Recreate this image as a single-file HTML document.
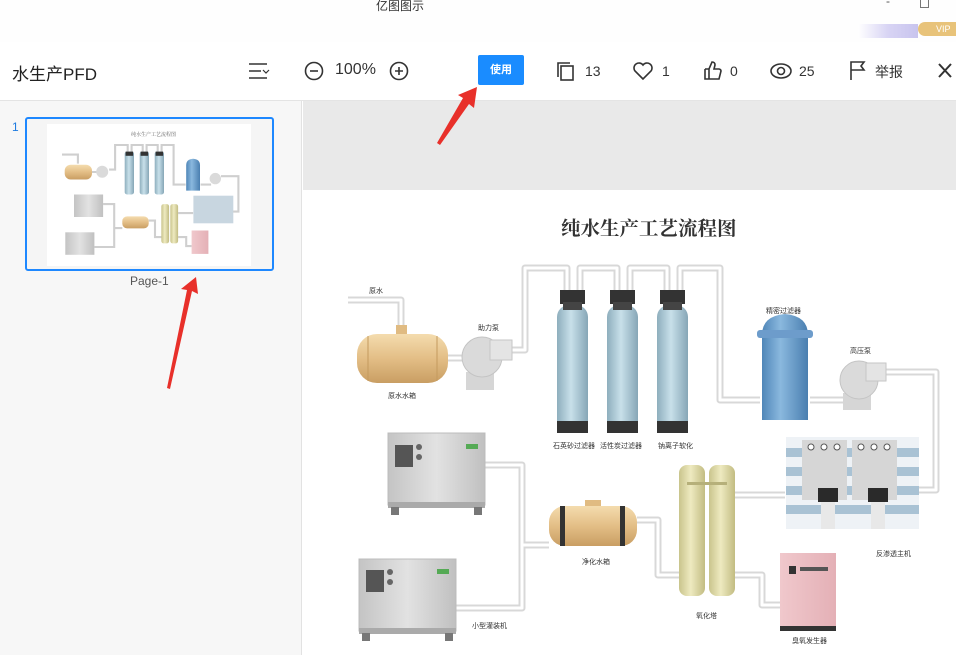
<!DOCTYPE html>
<html><head><meta charset="utf-8"><style>
*{margin:0;padding:0;box-sizing:border-box}
body{width:956px;height:655px;overflow:hidden;background:#fff;font-family:"Liberation Sans","Noto Sans CJK SC",sans-serif;position:relative}
.abs{position:absolute}
.tb{font-size:14px;color:#333}
</style></head><body>
<div class="abs" style="left:0;top:0;width:956px;height:42px;background:#fefefe"></div>
<div class="abs" style="left:376px;top:-3px;font-size:12px;color:#333">亿图图示</div>
<div class="abs" style="left:886px;top:-6px;font-size:12px;color:#555">-</div>
<div class="abs" style="left:920px;top:0px;width:9px;height:8px;border:1px solid #777;border-top:none"></div>
<div class="abs" style="left:858px;top:24px;width:60px;height:14px;background:linear-gradient(90deg,#fff,#d8d4f4,#c8c4ee)"></div>
<div class="abs" style="left:918px;top:22px;width:38px;height:14px;background:#e8c37a;border-radius:7px 0 0 7px;font-size:9px;color:#fff;padding-left:18px;line-height:14px">VIP</div>
<div class="abs" style="left:0;top:42px;width:956px;height:59px;background:#fff;border-bottom:1px solid #e4e4e4"></div>
<div class="abs tb" style="left:12px;top:60px;font-size:17px;color:#222">水生产PFD</div>
<svg class="abs" style="left:0;top:42px" width="956" height="58">
<g stroke="#333" stroke-width="1.6" fill="none">
<path d="M249 22h18M249 29h12M249 36h18"/><path d="M263 28l3 3 3-3" stroke-width="1.2"/>
<circle cx="314" cy="29" r="8.5"/><path d="M310 29h8"/>
<circle cx="399" cy="29" r="8.5"/><path d="M395 29h8M399 25v8"/>
<rect x="561" y="24" width="12" height="14"/><path d="M558 35V21h12"/>
<path d="M643 37l-8-8a5 5 0 0 1 8-6 5 5 0 0 1 8 6z"/>
<path d="M705 27h4l3-7c2 0 3 1 3 3l-1 4h5c1 0 2 1 2 2l-2 8h-10v-10M705 27v10h4"/>
<ellipse cx="781" cy="29" rx="10" ry="7"/><circle cx="781" cy="29" r="3.5"/>
<path d="M851 38V20h13l-3 4 3 4h-13"/>
<path d="M939 22l12 13M951 22l-12 13" stroke-width="2"/>
</g></svg>
<div class="abs tb" style="left:335px;top:61px;font-size:16px">100%</div>
<div class="abs" style="left:478px;top:55px;width:46px;height:30px;background:#1a8cff;border-radius:2px;color:#fff;font-size:11px;line-height:30px;text-align:center;font-weight:bold">使用</div>
<div class="abs tb" style="left:585px;top:63px">13</div>
<div class="abs tb" style="left:662px;top:63px">1</div>
<div class="abs tb" style="left:730px;top:63px">0</div>
<div class="abs tb" style="left:799px;top:63px">25</div>
<div class="abs tb" style="left:875px;top:62px">举报</div>
<div class="abs" style="left:0;top:101px;width:302px;height:554px;background:#f7f7f7;border-right:1px solid #e2e2e2"></div>
<div class="abs" style="left:12px;top:120px;font-size:12px;color:#1e7be0">1</div>
<div class="abs" style="left:25px;top:117px;width:249px;height:154px;border:2px solid #1e88ff;border-radius:3px;background:#f5f5f5"></div>
<div class="abs" style="left:47px;top:124px;width:204px;height:142px;background:#fff"></div>
<div class="abs" style="left:130px;top:274px;font-size:12px;color:#555">Page-1</div>
<div class="abs" style="left:303px;top:101px;width:653px;height:89px;background:#e9e9e9"></div>

<svg class="abs" style="left:0;top:0" width="956" height="655" viewBox="0 0 956 655">
<defs>
<linearGradient id="tan" x1="0" y1="0" x2="0" y2="1"><stop offset="0" stop-color="#f4dcae"/><stop offset=".5" stop-color="#e3be86"/><stop offset="1" stop-color="#c99e63"/></linearGradient>
<linearGradient id="col" x1="0" x2="1"><stop offset="0" stop-color="#8eaebd"/><stop offset=".45" stop-color="#c8e0ea"/><stop offset="1" stop-color="#86a6b6"/></linearGradient>
<linearGradient id="blu" x1="0" x2="1"><stop offset="0" stop-color="#4f86b8"/><stop offset=".4" stop-color="#8ab8de"/><stop offset="1" stop-color="#4a7fb0"/></linearGradient>
<linearGradient id="gry" x1="0" x2="1"><stop offset="0" stop-color="#c4c4c4"/><stop offset=".5" stop-color="#e2e2e2"/><stop offset="1" stop-color="#c0c0c0"/></linearGradient>
<linearGradient id="yel" x1="0" x2="1"><stop offset="0" stop-color="#c9c48c"/><stop offset=".45" stop-color="#eeeac0"/><stop offset="1" stop-color="#c2bc82"/></linearGradient>
<linearGradient id="pnk" x1="0" x2="1"><stop offset="0" stop-color="#f0c8cc"/><stop offset="1" stop-color="#e4b0b6"/></linearGradient>
</defs>
<g>
<g fill="none" stroke-linejoin="round">
<path stroke="#d8d8d8" stroke-width="7" d="M348 300H401V330M448 358H468M505 350H525V268H567V292M580 292V268H617V292M630 292V268H667V292M680 292V268H720V400H760M810 400H845M878 372H936V490H918M785 495H735M485 465H522V545H549M456 608H522V545M637 520H658V575H680M735 575H762V605H780"/>
<path stroke="#fff" stroke-width="3" d="M348 300H401V330M448 358H468M505 350H525V268H567V292M580 292V268H617V292M630 292V268H667V292M680 292V268H720V400H760M810 400H845M878 372H936V490H918M785 495H735M485 465H522V545H549M456 608H522V545M637 520H658V575H680M735 575H762V605H780"/>
</g>
<rect x="396" y="325" width="11" height="12" fill="#e0bb82"/>
<rect x="357" y="334" width="91" height="49" rx="20" fill="url(#tan)"/>
<path d="M368 336v45M437 336v45" stroke="#c49a5e" stroke-width="1"/>
<rect x="466" y="372" width="28" height="18" fill="#d6d6d6"/>
<circle cx="482" cy="357" r="20" fill="#dadada" stroke="#c4c4c4"/>
<rect x="490" y="340" width="22" height="20" fill="#e4e4e4" stroke="#c6c6c6"/>
<rect x="557" y="305" width="31" height="128" rx="12" fill="url(#col)"/><rect x="557" y="421" width="31" height="12" fill="#333"/><rect x="560" y="290" width="25" height="14" fill="#333"/><rect x="563" y="302" width="19" height="8" fill="#444"/>
<rect x="607" y="305" width="31" height="128" rx="12" fill="url(#col)"/><rect x="607" y="421" width="31" height="12" fill="#333"/><rect x="610" y="290" width="25" height="14" fill="#333"/><rect x="613" y="302" width="19" height="8" fill="#444"/>
<rect x="657" y="305" width="31" height="128" rx="12" fill="url(#col)"/><rect x="657" y="421" width="31" height="12" fill="#333"/><rect x="660" y="290" width="25" height="14" fill="#333"/><rect x="663" y="302" width="19" height="8" fill="#444"/>
<path d="M762 420V335Q762 316 785 314Q808 316 808 335V420Z" fill="url(#blu)"/>
<rect x="757" y="330" width="56" height="8" rx="3" fill="#6d9ccb"/>
<rect x="843" y="393" width="28" height="17" fill="#d6d6d6"/>
<circle cx="859" cy="380" r="19" fill="#dadada" stroke="#c4c4c4"/>
<rect x="866" y="363" width="20" height="18" fill="#e4e4e4" stroke="#c6c6c6"/>
<rect x="786" y="437" width="133" height="92" fill="#eef2f6"/>
<rect x="786" y="448" width="133" height="9" fill="#a9c2d4"/><rect x="786" y="467" width="133" height="9" fill="#a9c2d4"/><rect x="786" y="486" width="133" height="9" fill="#a9c2d4"/><rect x="786" y="505" width="133" height="9" fill="#a9c2d4"/>
<rect x="802" y="440" width="45" height="60" fill="#d6d6d6"/><rect x="852" y="440" width="45" height="60" fill="#d6d6d6"/>
<circle cx="811" cy="447" r="3" fill="#fff" stroke="#555"/><circle cx="824" cy="447" r="3" fill="#fff" stroke="#555"/><circle cx="837" cy="447" r="3" fill="#fff" stroke="#555"/><circle cx="861" cy="447" r="3" fill="#fff" stroke="#555"/><circle cx="874" cy="447" r="3" fill="#fff" stroke="#555"/><circle cx="887" cy="447" r="3" fill="#fff" stroke="#555"/>
<rect x="818" y="488" width="20" height="14" fill="#2a2a2a"/><rect x="868" y="488" width="20" height="14" fill="#2a2a2a"/>
<rect x="821" y="502" width="14" height="27" fill="#e8e8e8"/><rect x="871" y="502" width="14" height="27" fill="#e8e8e8"/>
<rect x="388" y="433" width="97" height="72" fill="url(#gry)" stroke="#bcbcbc"/>
<rect x="395" y="445" width="18" height="22" fill="#555"/><circle cx="419" cy="447" r="3" fill="#666"/><circle cx="419" cy="457" r="3" fill="#666"/>
<rect x="388" y="502" width="97" height="6" fill="#aaa"/><rect x="391" y="507" width="8" height="8" fill="#777"/><rect x="474" y="507" width="8" height="8" fill="#777"/>
<rect x="466" y="444" width="12" height="5" fill="#5a5"/>
<rect x="359" y="559" width="97" height="72" fill="url(#gry)" stroke="#bcbcbc"/>
<rect x="366" y="570" width="18" height="22" fill="#555"/><circle cx="390" cy="572" r="3" fill="#666"/><circle cx="390" cy="582" r="3" fill="#666"/>
<rect x="359" y="628" width="97" height="6" fill="#aaa"/><rect x="362" y="633" width="8" height="8" fill="#777"/><rect x="445" y="633" width="8" height="8" fill="#777"/>
<rect x="437" y="569" width="12" height="5" fill="#5a5"/>
<rect x="585" y="500" width="16" height="8" fill="#e0bb82"/>
<rect x="549" y="506" width="88" height="40" rx="16" fill="url(#tan)"/>
<rect x="560" y="506" width="5" height="40" fill="#333"/><rect x="620" y="506" width="5" height="40" fill="#333"/>
<rect x="679" y="465" width="26" height="131" rx="8" fill="url(#yel)"/>
<rect x="709" y="465" width="26" height="131" rx="8" fill="url(#yel)"/>
<rect x="687" y="482" width="40" height="3" fill="#b6b07a"/>
<rect x="780" y="553" width="56" height="75" fill="url(#pnk)"/>
<rect x="780" y="626" width="56" height="5" fill="#333"/>
<rect x="789" y="566" width="7" height="8" fill="#333"/><rect x="800" y="567" width="28" height="4" fill="#555"/>
</g>
<g transform="translate(-42.4,64.6) scale(0.3)">
<path fill="none" stroke="#cfcfcf" stroke-width="7" d="M348 300H401V330M448 358H468M505 350H525V268H567V292M580 292V268H617V292M630 292V268H667V292M680 292V268H720V400H760M810 400H845M878 372H936V490H918M785 495H735M485 465H522V545H549M456 608H522V545M637 520H658V575H680M735 575H762V605H780"/>
<rect x="357" y="334" width="91" height="49" rx="20" fill="url(#tan)"/>
<circle cx="482" cy="357" r="20" fill="#dadada"/>
<rect x="557" y="290" width="31" height="143" rx="8" fill="url(#col)"/><rect x="607" y="290" width="31" height="143" rx="8" fill="url(#col)"/><rect x="657" y="290" width="31" height="143" rx="8" fill="url(#col)"/>
<rect x="560" y="290" width="25" height="14" fill="#333"/><rect x="610" y="290" width="25" height="14" fill="#333"/><rect x="660" y="290" width="25" height="14" fill="#333"/>
<path d="M762 420V335Q762 316 785 314Q808 316 808 335V420Z" fill="url(#blu)"/>
<circle cx="859" cy="380" r="19" fill="#dadada"/>
<rect x="786" y="437" width="133" height="92" fill="#c8d6e0"/>
<rect x="388" y="433" width="97" height="75" fill="url(#gry)"/>
<rect x="359" y="559" width="97" height="75" fill="url(#gry)"/>
<rect x="549" y="506" width="88" height="40" rx="16" fill="url(#tan)"/>
<rect x="679" y="465" width="26" height="131" rx="8" fill="url(#yel)"/><rect x="709" y="465" width="26" height="131" rx="8" fill="url(#yel)"/>
<rect x="780" y="553" width="56" height="78" fill="url(#pnk)"/>
</g>
<text x="131" y="136" font-size="5" fill="#666" font-family="Liberation Serif,Noto Serif CJK SC,serif">纯水生产工艺流程图</text>
<text x="561" y="235" font-family="Liberation Serif,Noto Serif CJK SC,serif" font-size="19.5" font-weight="bold" fill="#333">纯水生产工艺流程图</text>
<g font-size="7" fill="#333" font-family="Liberation Sans,Noto Sans CJK SC,sans-serif">
<text x="369" y="293">原水</text><text x="388" y="398">原水水箱</text><text x="478" y="330">助力泵</text>
<text x="553" y="448">石英砂过滤器</text><text x="600" y="448">活性炭过滤器</text><text x="658" y="448">钠离子软化</text>
<text x="766" y="313">精密过滤器</text><text x="850" y="353">高压泵</text><text x="876" y="556">反渗透主机</text>
<text x="582" y="564">净化水箱</text><text x="696" y="618">氧化塔</text><text x="792" y="643">臭氧发生器</text><text x="472" y="628">小型灌装机</text>
</g>
<path fill="#e8302a" d="M437 143L463 98L458 95L477 87L474 108L469 104L440 145Z"/>
<path fill="#e8302a" d="M167 388L187 290L181 289L196 277L198 294L192 291L170 389Z"/>
</svg>
</body></html>
